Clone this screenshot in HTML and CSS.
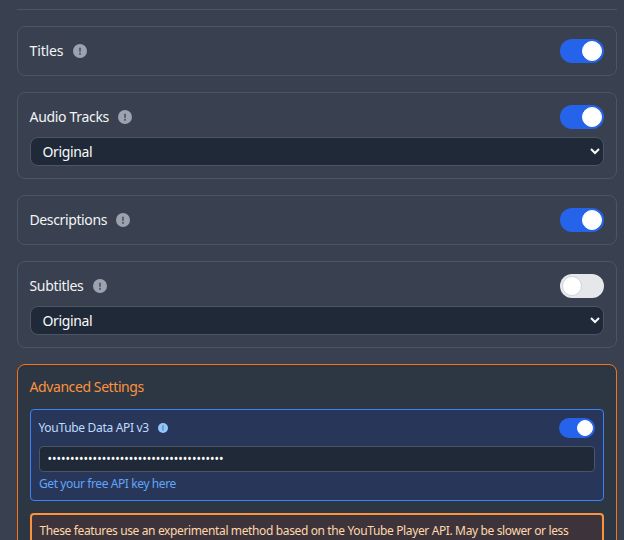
FILE: index.html
```html
<!DOCTYPE html>
<html lang="en">
<head>
<meta charset="utf-8">
<title>Settings</title>
<link rel="stylesheet" href="styles.css">
</head>
<body>
<svg class="defs" aria-hidden="true">
  <symbol id="info" viewBox="0 0 14 14"><circle cx="7" cy="7" r="7"/><path class="mark" d="M5.9 3.7h2.2L7.8 8.2H6.2zM6 9h2v1.7H6z"/></symbol>
  <symbol id="info-i" viewBox="0 0 10 10"><circle cx="5" cy="5" r="5"/><path class="mark-blue" d="M4.2 2.3h1.6v5.2H4.2z"/></symbol>
</svg>
<main class="panel">
  <section class="card">
    <div class="row"><span class="label wide">Titles</span><svg class="info"><use href="#info"/></svg><span class="toggle on"></span></div>
  </section>
  <section class="card">
    <div class="row"><span class="label">Audio Tracks</span><svg class="info"><use href="#info"/></svg><span class="toggle on"></span></div>
    <select class="select"><option>Original</option></select>
  </section>
  <section class="card">
    <div class="row"><span class="label tight">Descriptions</span><svg class="info"><use href="#info"/></svg><span class="toggle on"></span></div>
  </section>
  <section class="card">
    <div class="row"><span class="label">Subtitles</span><svg class="info"><use href="#info"/></svg><span class="toggle"></span></div>
    <select class="select"><option>Original</option></select>
  </section>
  <section class="card advanced">
    <h2 class="heading">Advanced Settings</h2>
    <div class="api">
      <div class="row small"><span class="label">YouTube Data API v3</span><svg class="info"><use href="#info-i"/></svg><span class="toggle on"></span></div>
      <input class="key" type="password" value="000000000000000000000000000000000000000">
      <a class="link">Get your free API key here</a>
    </div>
    <div class="warning">These features use an experimental method based on the YouTube Player API. May be slower or less</div>
  </section>
</main>
</body>
</html>
```
FILE: styles.css
```css
*, *::before { box-sizing: border-box; }
html { height: 100%; overflow: hidden; background: #394150; }
body {
  margin: 0;
  height: 540px;
  overflow: hidden;
  font-family: "Noto Sans", sans-serif;
  font-size: 14px;
  line-height: 20px;
  color: #f3f4f6;
}
.defs { display: none; }
.mark { fill: #566070; }
.mark-blue { fill: #668fc6; }
.panel {
  width: 600px;
  margin: 9px 0 0 17px;
  padding-top: 16px;
  border-top: 1px solid #4b5563;
  display: flex;
  flex-direction: column;
  gap: 16px;
}
.card { padding: 12px; border: 1px solid #4b5563; border-radius: 8px; }
.row { display: flex; align-items: center; height: 24px; }
.label { margin-left: -0.5px; letter-spacing: -0.32px; }
.wide { letter-spacing: -0.12px; }
.tight { letter-spacing: -0.38px; }
.info { width: 14px; height: 14px; margin-left: 9.5px; fill: #9ca3af; }
.toggle {
  width: 44px;
  height: 24px;
  margin-left: auto;
  padding: 2px;
  border-radius: 12px;
  background: #e5e7eb;
  display: flex;
}
.toggle::before {
  content: "";
  width: 20px;
  height: 20px;
  border-radius: 50%;
  border: 1px solid #d1d5db;
  background: #fff;
}
.toggle.on { background: #2563eb; justify-content: flex-end; }
.toggle.on::before { border-color: #fff; }
.select {
  display: block;
  width: 100%;
  height: 29px;
  margin-top: 8px;
  padding: 0 0 0 7.5px;
  border: 1px solid #4b5563;
  border-radius: 8px;
  background-color: #1f2937;
  color: #f9fafb;
  font: 14px/20px "Noto Sans", sans-serif;
  letter-spacing: -0.38px;
}
.advanced { border-color: #f97316; background: #2d3643; }
.heading {
  margin: 0 0 12px -0.5px;
  font-size: 14px;
  line-height: 20px;
  font-weight: 400;
  letter-spacing: -0.41px;
  color: #fb923c;
}
.api {
  height: 92px;
  padding: 8px;
  border: 1px solid #3b82f6;
  border-radius: 4px;
  background: #283759;
  font-size: 12px;
  line-height: 16px;
}
.small { height: 20px; color: #bfdbfe; }
.small .info { width: 10px; height: 10px; fill: #93c5fd; }
.small .toggle { width: 36px; height: 20px; }
.small .toggle::before { width: 16px; height: 16px; }
.key {
  display: block;
  width: 100%;
  height: 26px;
  margin: 8px 0 4px;
  padding: 3px 7.5px 5px;
  border: 1px solid #4b5563;
  border-radius: 4px;
  background: #1f2937;
  color: #fff;
  font: 12px/16px "Noto Sans", sans-serif;
}
.link { display: block; color: #60a5fa; letter-spacing: -0.4px; }
.warning {
  margin-top: 12px;
  padding: 8px 0 8px 7.5px;
  border: 2px solid #fb923c;
  border-radius: 4px;
  background: #3d343b;
  color: #fed7aa;
  font-size: 12px;
  line-height: 16px;
  letter-spacing: -0.37px;
  white-space: nowrap;
}
```
